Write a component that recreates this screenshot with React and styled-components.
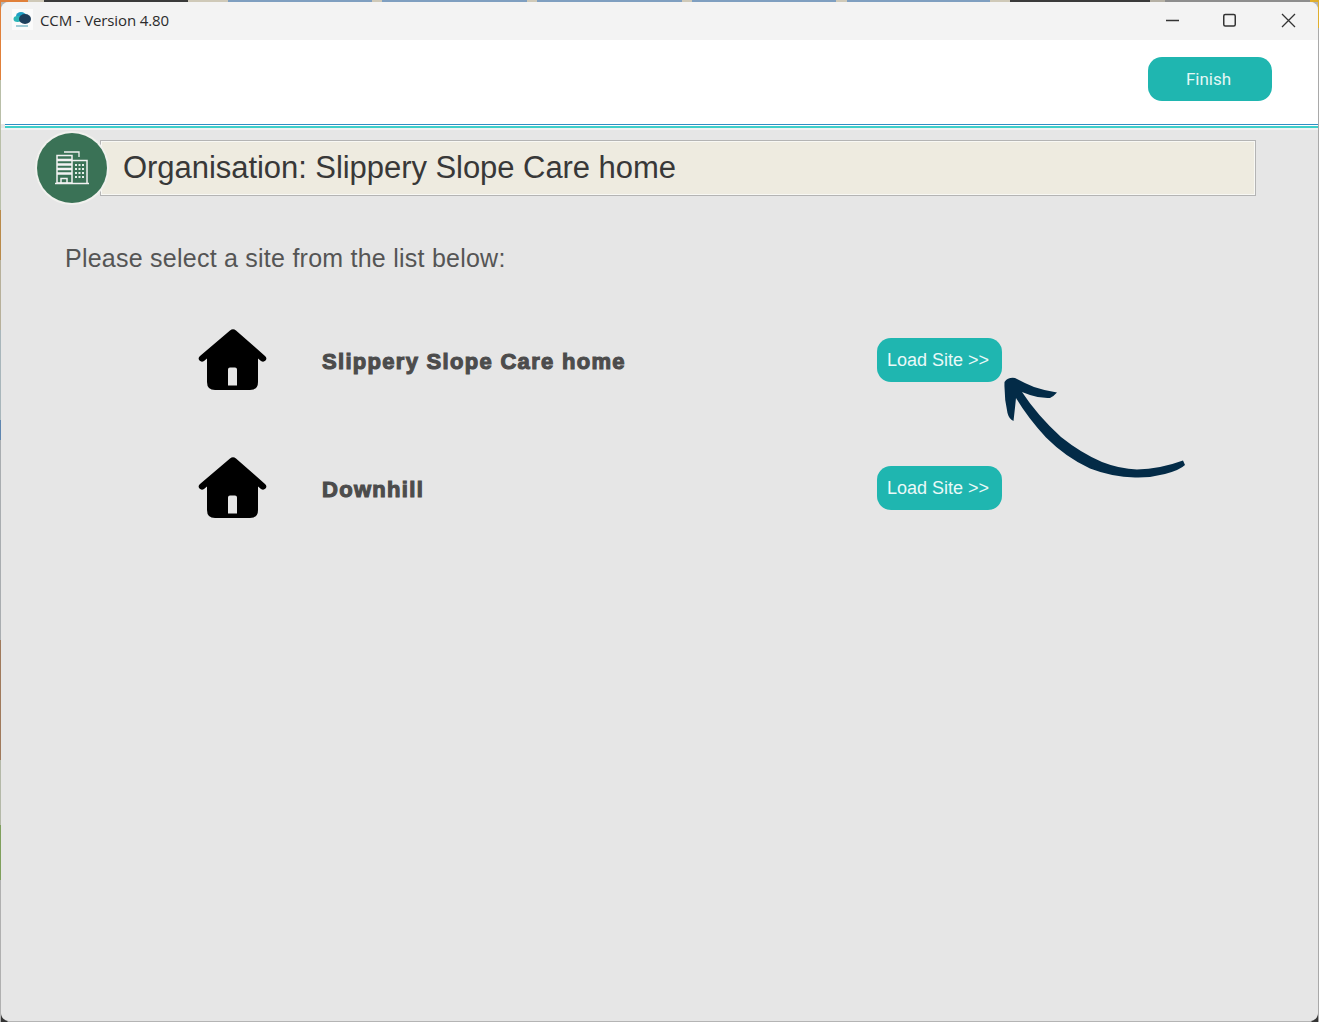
import React from "react";
import styled, { createGlobalStyle } from "styled-components";

const Global = createGlobalStyle`
  html, body { margin: 0; padding: 0; background: #b4b4b4; }
  #root { width: 1319px; height: 1022px; overflow: hidden; }
`;

const topStrip = `linear-gradient(90deg,
  #e0803a 0 28px, #cfc9b8 28px 44px, #3a3a3a 44px 188px, #cfc9b8 188px 228px,
  #7f9fc0 228px 372px, #cfc9b8 372px 382px, #7f9fc0 382px 527px, #cfc9b8 527px 537px,
  #7f9fc0 537px 682px, #cfc9b8 682px 692px, #7f9fc0 692px 836px, #cfc9b8 836px 847px,
  #7f9fc0 847px 990px, #cfc9b8 990px 1010px, #3a3a3a 1010px 1150px, #b5b0a4 1150px 1165px,
  #8d8d8d 1165px 1308px, #8d8d8d 1308px 1310px, #dfae2c 1310px 100%)`;

const leftStrip = `linear-gradient(180deg,
  #e0803a 0 80px, #b9bfa8 80px 210px, #b98a4a 210px 260px, #b7b09a 260px 330px,
  #a8b6bb 330px 420px, #5f86b0 420px 440px, #a9adb0 440px 640px, #a07a5c 640px 760px,
  #b4b9a8 760px 825px, #7f9f5c 825px 880px, #b0b0b0 880px 100%)`;

const rightStrip = `linear-gradient(180deg, #dfae2c 0 28px, #a9a9a9 28px 100%)`;

const Desktop = styled.div`
  width: 1319px;
  height: 1022px;
  box-sizing: border-box;
  padding: 2px 1px 1px 1px;
  background:
    ${topStrip} top left / 100% 2px no-repeat,
    ${leftStrip} top left / 1px 100% no-repeat,
    ${rightStrip} top right / 1px 100% no-repeat,
    radial-gradient(circle at 0 100%, #333 0 7px, transparent 8px) bottom left / 10px 10px no-repeat,
    radial-gradient(circle at 100% 100%, #333 0 7px, transparent 8px) bottom right / 10px 10px no-repeat,
    #b4b4b4;
`;

const Window = styled.div`
  position: relative;
  width: 100%;
  height: 100%;
  display: flex;
  flex-direction: column;
  background: #e6e6e6;
  border-radius: 8px;
  overflow: hidden;
`;

const TitleBar = styled.div`
  height: 38px;
  flex: none;
  display: flex;
  align-items: center;
  background: #f3f3f3;
  padding: 0 0 0 11px;
`;

const AppIcon = styled.svg`
  width: 21px;
  height: 21px;
  flex: none;
  margin-top: -3px;
`;

const TitleText = styled.span`
  margin-left: 7px;
  font: 400 15px "Open Sans", "Noto Sans", sans-serif;
  letter-spacing: -0.13px;
  color: #2b2b2b;
  margin-top: -3px;
`;

const WindowControls = styled.div`
  margin-left: auto;
  display: flex;
  align-items: center;
  margin-top: -2px;
`;

const ControlButton = styled.svg`
  width: ${(p) => p.$w || 58}px;
  height: 16px;
  flex: none;
`;

const Toolbar = styled.div`
  height: 84px;
  flex: none;
  box-sizing: border-box;
  display: flex;
  justify-content: flex-end;
  align-items: flex-start;
  padding: 17px 46px 0 0;
  background: #ffffff;
`;

const FinishButton = styled.button`
  width: 124px;
  height: 44px;
  border: none;
  border-radius: 14px;
  background: #1fb6b0;
  color: #e4f7f5;
  font: 400 17px Roboto, "Liberation Sans", sans-serif;
  padding: 0 3px 0 0;
`;

const Rule = styled.div`
  height: 4px;
  flex: none;
  margin-left: 4px;
  box-sizing: border-box;
  border-top: 1px solid #2f8fc4;
  border-bottom: 2px solid #3fcfc9;
  background: #ffffff;
`;

const Content = styled.main`
  flex: 1;
  display: flex;
  flex-direction: column;
  padding: 2px 62px 0 36px;
  border-top: 2px solid #f2f2f2;
`;

const OrgHeader = styled.header`
  display: flex;
  align-items: center;
  height: 72px;
`;

const OrgBadge = styled.div`
  position: relative;
  z-index: 1;
  flex: none;
  width: 70px;
  height: 70px;
  margin-right: -7px;
  border-radius: 50%;
  background: #3a7256;
  box-shadow: 0 0 0 2px #f1f1ee;
  display: flex;
  align-items: center;
  justify-content: center;
`;

const OrgBanner = styled.div`
  flex: 1;
  height: 56px;
  box-sizing: border-box;
  display: flex;
  align-items: center;
  padding: 0 0 0 22px;
  background: #eeebe0;
  border: 1px solid #b4b4b4;
  box-shadow: inset 0 0 0 1px #f8f8f4;
`;

const OrgTitle = styled.h1`
  margin: 0;
  font: 400 31px "Liberation Sans", Arial, sans-serif;
  color: #383838;
  letter-spacing: -0.05px;
`;

const Prompt = styled.p`
  margin: 39px 0 0 28px;
  font: 400 25px "Liberation Sans", Arial, sans-serif;
  line-height: 30px;
  color: #555555;
  letter-spacing: 0.24px;
`;

const SiteList = styled.ul`
  list-style: none;
  margin: 54px 0 0;
  padding: 0;
  display: flex;
  flex-direction: column;
  gap: 64px;
`;

const SiteRow = styled.li`
  display: flex;
  align-items: center;
  height: 64px;
`;

const HouseIcon = styled.svg`
  width: 70px;
  height: 64px;
  margin-left: 161px;
  flex: none;
`;

const SiteName = styled.span`
  width: 555px;
  margin-left: 54px;
  margin-top: 6px;
  flex: none;
  font: 700 22px "Liberation Sans", Arial, sans-serif;
  color: #4c4c4c;
  -webkit-text-stroke: 1.1px #4c4c4c;
  letter-spacing: 1.3px;
`;

const LoadButton = styled.button`
  width: 125px;
  height: 44px;
  border: none;
  border-radius: 14px;
  background: #1fb6b0;
  color: #e9f9f8;
  font: 400 18px "Liberation Sans", Arial, sans-serif;
  padding: 2px 3px 0 0;
  margin-top: 1px;
  white-space: nowrap;
`;

const Arrow = styled.svg`
  position: absolute;
  left: 999px;
  top: 368px;
  width: 190px;
  height: 112px;
`;

const House = () => (
  <HouseIcon viewBox="0 0 70 64">
    <path
      fillRule="evenodd"
      fill="#000"
      d="M32 3.500 Q35 1 38 3.500 L67 29 Q69.500 31.500 67.500 33.500 Q65.500 35.500 63 34 L60 31.500 L60 55 Q60 63 52 63 L17 63 Q9 63 9 55 L9 31.500 L6 34 Q3.500 35.500 1.500 33.500 Q-0.500 31.500 2 29 Z M30 42.500 Q30 40.500 32 40.500 L37 40.500 Q39 40.500 39 42.500 L39 58.500 L30 58.500 Z"
    />
  </HouseIcon>
);

const sites = ["Slippery Slope Care home", "Downhill"];

export default function App() {
  return (
    <>
      <Global />
      <Desktop>
        <Window>
          <TitleBar>
            <AppIcon viewBox="0 0 21 21">
              <rect width="21" height="21" fill="#fbfbfb" />
              <ellipse cx="9" cy="7" rx="5" ry="4" fill="#1f9fc4" />
              <ellipse cx="5.500" cy="10" rx="4" ry="3" fill="#2cb6b8" />
              <ellipse cx="13" cy="10" rx="6" ry="5" fill="#1e3f5c" />
              <rect x="4" y="16" width="12" height="2" fill="#9fcbd6" />
            </AppIcon>
            <TitleText>CCM - Version 4.80</TitleText>
            <WindowControls>
              <ControlButton viewBox="0 0 58 16">
                <path d="M24 8.500 H37" stroke="#333" strokeWidth="1.300" />
              </ControlButton>
              <ControlButton viewBox="0 0 58 16">
                <rect x="23.750" y="2.500" width="11.500" height="11.500" rx="1.500" fill="none" stroke="#333" strokeWidth="1.500" />
              </ControlButton>
              <ControlButton $w={60} viewBox="0 0 60 16">
                <path d="M24 2 L37 15 M37 2 L24 15" stroke="#333" strokeWidth="1.300" />
              </ControlButton>
            </WindowControls>
          </TitleBar>
          <Toolbar>
            <FinishButton>Finish</FinishButton>
          </Toolbar>
          <Rule />
          <Content>
            <OrgHeader>
              <OrgBadge>
                <svg width="36" height="36" viewBox="0 0 36 36" fill="none">
                  <path d="M10 2 H25 V7" stroke="#f2f2f2" strokeWidth="1.300" />
                  <path d="M3 5.500 H18 V33 H3 Z" stroke="#f2f2f2" strokeWidth="1.500" fill="#3a7256" />
                  <path d="M3 10 H18 M3 14.500 H18 M3 19 H18 M3 23.500 H18" stroke="#f2f2f2" strokeWidth="2.700" />
                  <path d="M18 10.500 H33 V33" stroke="#f2f2f2" strokeWidth="1.500" />
                  <path d="M21 15 H31 M21 19 H31 M21 23 H31 M21 27 H31" stroke="#e4eee9" strokeWidth="1.800" strokeDasharray="2 1.500" />
                  <path d="M1 33.500 H35" stroke="#f2f2f2" strokeWidth="1.600" />
                  <path d="M7 33 V28.500 H13 V33" stroke="#f2f2f2" strokeWidth="1.500" />
                </svg>
              </OrgBadge>
              <OrgBanner>
                <OrgTitle>Organisation: Slippery Slope Care home</OrgTitle>
              </OrgBanner>
            </OrgHeader>
            <Prompt>Please select a site from the list below:</Prompt>
            <SiteList>
              {sites.map((name) => (
                <SiteRow key={name}>
                  <House />
                  <SiteName>{name}</SiteName>
                  <LoadButton>Load Site &gt;&gt;</LoadButton>
                </SiteRow>
              ))}
            </SiteList>
          </Content>
          <Arrow viewBox="1000 370 190 112">
            <path
              fill="#032b47"
              d="M1004.500 382 Q1008 377 1015 378 Q1024 383 1034 387 Q1046 391 1057 392.500 Q1054 396 1050 398 Q1040 398.500 1030 395 L1022 392 Q1037 415 1061 437 Q1081 453 1102 462 Q1120 469 1137 469.500 Q1160 469 1183 460.500 L1185 465 Q1180 470 1165 474 Q1150 478 1135 477.500 Q1112 477 1090 468.500 Q1066 457.500 1046 437.500 Q1028 418 1016 398 Q1015 408 1013.500 421 Q1009 419 1007.500 413 Q1004 398 1004.500 382 Z"
            />
          </Arrow>
        </Window>
      </Desktop>
    </>
  );
}
